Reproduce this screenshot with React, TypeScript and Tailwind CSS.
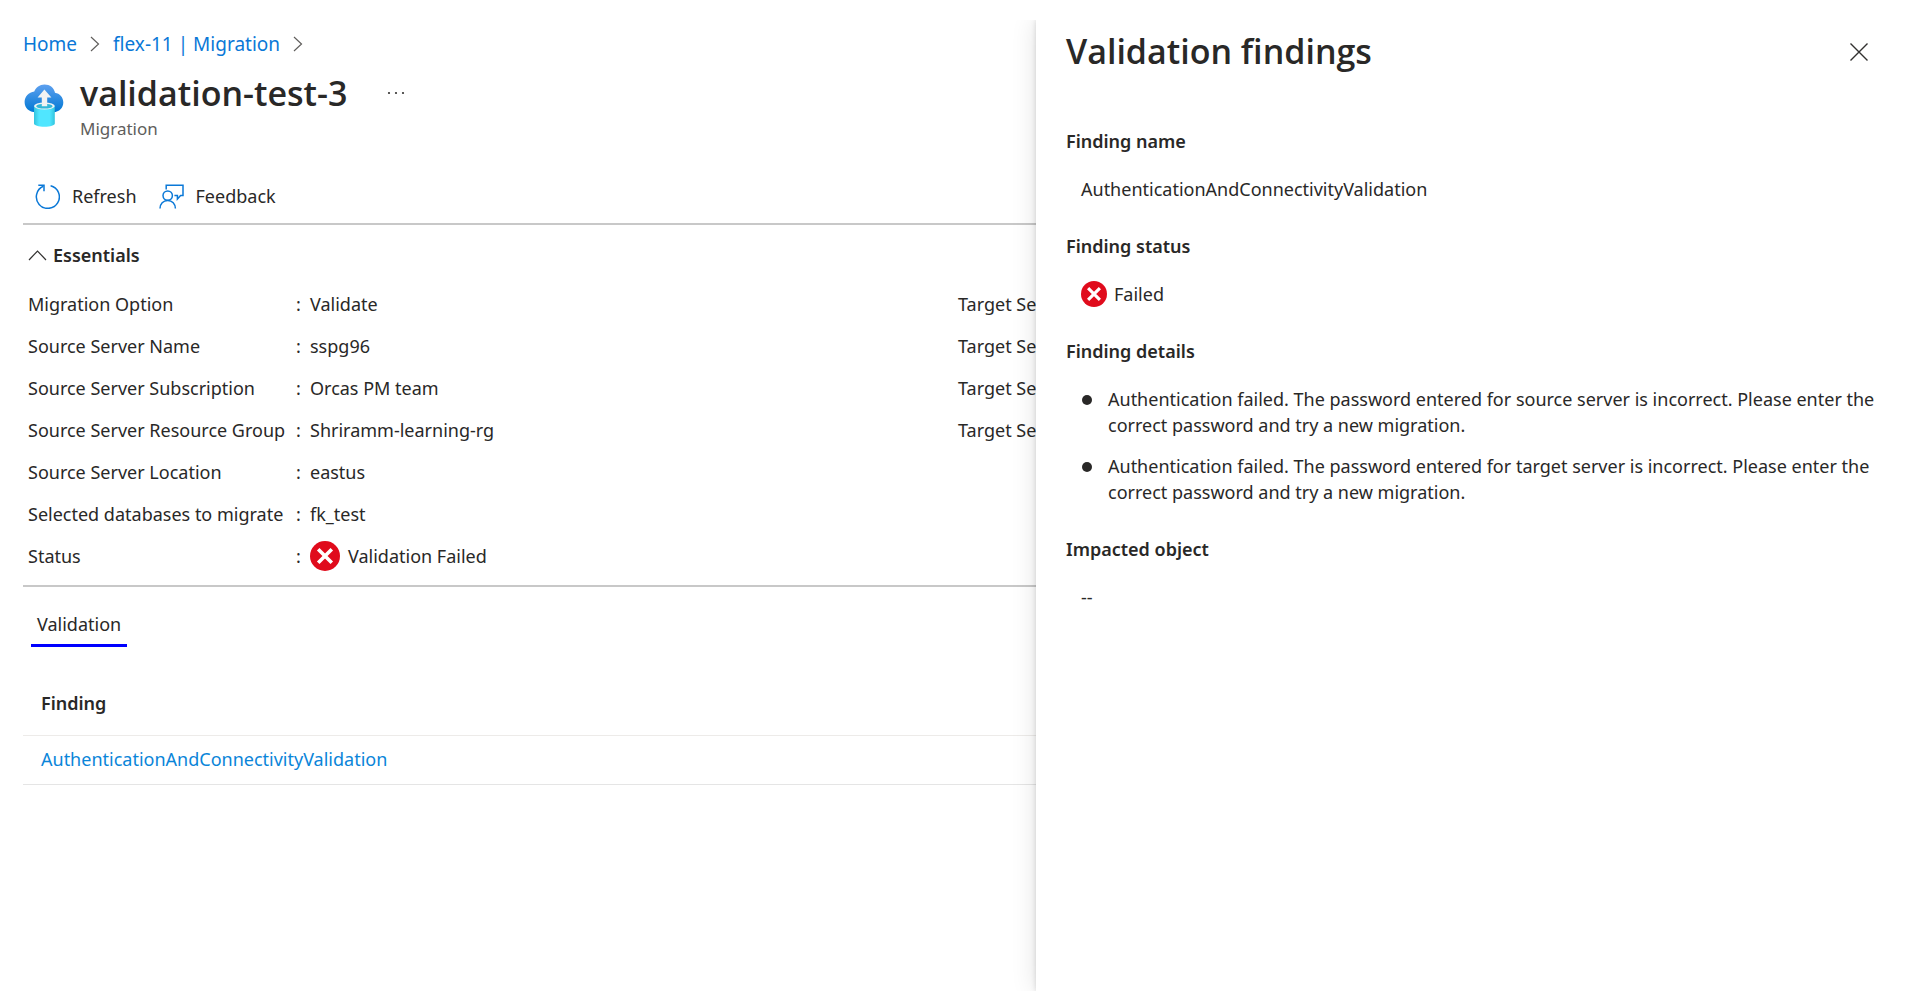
import type { ReactNode } from 'react';

const essentials: { label: string; value: string; failed?: boolean; target?: string }[] = [
  { label: 'Migration Option', value: 'Validate', target: 'Target Se' },
  { label: 'Source Server Name', value: 'sspg96', target: 'Target Se' },
  { label: 'Source Server Subscription', value: 'Orcas PM team', target: 'Target Se' },
  { label: 'Source Server Resource Group', value: 'Shriramm-learning-rg', target: 'Target Se' },
  { label: 'Source Server Location', value: 'eastus' },
  { label: 'Selected databases to migrate', value: 'fk_test' },
  { label: 'Status', value: 'Validation Failed', failed: true },
];

const details = [
  'Authentication failed. The password entered for source server is incorrect. Please enter the correct password and try a new migration.',
  'Authentication failed. The password entered for target server is incorrect. Please enter the correct password and try a new migration.',
];

function FailedIcon({ className }: { className: string }) {
  return (
    <svg viewBox="0 0 30 30" className={className} aria-hidden="true">
      <circle cx="15" cy="15" r="15" fill="#e00b1c" />
      <path d="M8.2 8.2 21.8 21.8M21.8 8.2 8.2 21.8" stroke="#fff" strokeWidth="3.6" fill="none" />
    </svg>
  );
}

function BreadcrumbChevron() {
  return (
    <svg viewBox="0 0 10 16" className="h-4 w-[10px]" fill="none" stroke="#605e5c" strokeWidth="1.2" aria-hidden="true">
      <path d="M1 1l7.5 7L1 15" />
    </svg>
  );
}

function MigrationIcon() {
  return (
    <svg viewBox="0 0 40 43" className="h-[43px] w-10 shrink-0" aria-hidden="true">
      <defs>
        <linearGradient id="cloud" x1="0" y1="0" x2="0" y2="1">
          <stop offset="0" stopColor="#5ea0ef" />
          <stop offset="1" stopColor="#0078d4" />
        </linearGradient>
        <linearGradient id="cylinder" x1="0" y1="0" x2="1" y2="0">
          <stop offset="0" stopColor="#32c4de" />
          <stop offset="0.25" stopColor="#50e6ff" />
          <stop offset="0.75" stopColor="#50e6ff" />
          <stop offset="1" stopColor="#32c4de" />
        </linearGradient>
      </defs>
      <path
        d="M39.3 18.6c0-5.300-3.600-9-8.300-9.800C30.200 3.700 26 .4 20.500.4c-4.800 0-8.700 2.900-10.200 7.100C4.600 8.200.6 12.600.6 17.900c0 6 4.800 10.300 10.800 10.300h18.300c5.400 0 9.600-4.200 9.600-9.600z"
        fill="url(#cloud)"
      />
      <path d="M10 22v17.500c0 1.900 4.500 3.200 10.400 3.200s10.400-1.300 10.400-3.200V22z" fill="url(#cylinder)" />
      <ellipse cx="20.400" cy="22" rx="10.400" ry="3.500" fill="#f0f2f4" />
      <ellipse cx="20.400" cy="22.200" rx="8.200" ry="2.400" fill="#32b8d8" />
      <path d="M20.400 5.400l7 8h-4.200v8.800h-5.400v-8.800h-4.200z" fill="#f2f2f2" />
    </svg>
  );
}

function RefreshIcon() {
  return (
    <svg viewBox="0 0 25 25" className="size-[25px]" fill="none" stroke="#0a78d7" strokeWidth="1.5" aria-hidden="true">
      <path d="M15.600 1.700A11.500 11.500 0 1 1 8.300 2.300" />
      <path d="M3.300 1.200H9V7.200" />
    </svg>
  );
}

function FeedbackIcon() {
  return (
    <svg viewBox="0 0 25 25" className="size-[25px]" fill="none" stroke="#0a78d7" strokeWidth="1.5" aria-hidden="true">
      <path d="M7.200 5.500V1.200H24V11.600H21.600L18.400 15V11.600H15.400" />
      <circle cx="8.700" cy="11.600" r="4.700" />
      <path d="M1 24.500C1 19.800 4.200 16.400 8.700 16.400s7.700 3.400 7.700 8.100" />
    </svg>
  );
}

function Section({ title, children }: { title: string; children: ReactNode }) {
  return (
    <section>
      <h3 className="font-semibold">{title}</h3>
      <div className="mt-[22px] pl-[15px]">{children}</div>
    </section>
  );
}

export default function App() {
  return (
    <div className="flex min-h-screen flex-col bg-white pt-5 font-['Noto_Sans','Open_Sans',sans-serif] text-[18px] leading-[26px] text-[#292827]">
      <div className="flex flex-1 overflow-hidden">
        <main className="min-w-0 flex-1 whitespace-nowrap pl-[23px]">
          <nav aria-label="Breadcrumb" className="flex items-center pt-[11px] text-[19px] text-[#0a78d7]">
            <a href="#home">Home</a>
            <span className="px-[13px]"><BreadcrumbChevron /></span>
            <a href="#migration">flex-11 | Migration</a>
            <span className="px-[13px]"><BreadcrumbChevron /></span>
          </nav>

          <header className="mt-[13px] flex items-start">
            <div className="pt-[14px] pl-px"><MigrationIcon /></div>
            <div className="pl-4">
              <div className="flex h-[46px] items-center">
                <h1 className="font-['Open_Sans','Noto_Sans',sans-serif] text-[34px] leading-[46px] font-semibold">validation-test-3</h1>
                <button type="button" aria-label="More actions" className="ml-10">
                  <svg viewBox="0 0 18 4" className="h-1 w-[18px]" fill="#323130" aria-hidden="true">
                    <circle cx="2" cy="2" r="1.100" />
                    <circle cx="9" cy="2" r="1.100" />
                    <circle cx="16" cy="2" r="1.100" />
                  </svg>
                </button>
              </div>
              <p className="text-[17px] leading-[26px] text-[#605e5c]">Migration</p>
            </div>
          </header>

          <div className="flex h-[83px] items-end gap-[22px] border-b-2 border-[#c8c8c8] pb-[14px] pl-3">
            <button type="button" className="flex items-center gap-3"><RefreshIcon />Refresh</button>
            <button type="button" className="flex items-center gap-3"><FeedbackIcon />Feedback</button>
          </div>

          <section className="border-b-2 border-[#c8c8c8] pb-2 pl-[5px]">
            <button type="button" className="mt-[17px] flex items-center gap-[6px] font-semibold">
              <svg viewBox="0 0 19 12" className="h-3 w-[19px]" fill="none" stroke="#323130" strokeWidth="1.200" aria-hidden="true">
                <path d="M1 11l8.500-9L18 11" />
              </svg>
              Essentials
            </button>
            <dl className="mt-[15px]">
              {essentials.map((row) => (
                <div key={row.label} className="flex h-[42px] items-center">
                  <dt className="w-[268px] shrink-0">{row.label}</dt>
                  <dd className="flex w-[662px] shrink-0 items-center">
                    <span className="w-[14px]">:</span>
                    {row.failed && <FailedIcon className="mr-2 size-[30px]" />}
                    {row.value}
                  </dd>
                  {row.target && <dt>{row.target}</dt>}
                </div>
              ))}
            </dl>
          </section>

          <div role="tablist" className="mt-6 pl-2">
            <button type="button" role="tab" aria-selected="true" className="border-b-3 border-[#0000ff] px-[6px] pb-[7px]">
              Validation
            </button>
          </div>

          <table className="mt-[30px] w-full text-left">
            <thead>
              <tr className="h-[58px] border-b border-[#edebe9]">
                <th className="pb-[6px] pl-[18px] font-semibold">Finding</th>
              </tr>
            </thead>
            <tbody>
              <tr className="h-[49px] border-b border-[#e5e5e5]">
                <td className="pb-[2px] pl-[18px]">
                  <a href="#finding" className="text-[#0a85d9]">AuthenticationAndConnectivityValidation</a>
                </td>
              </tr>
            </tbody>
          </table>
        </main>

        <aside className="z-10 w-[875px] shrink-0 bg-white pr-7 pl-[30px] shadow-[0_0_24px_rgba(0,0,0,0.12),0_0_5px_rgba(0,0,0,0.14)]">
          <div className="flex items-center justify-between pt-2 pr-[15px]">
            <h2 className="font-['Open_Sans','Noto_Sans',sans-serif] text-[34px] leading-[46px] font-semibold">Validation findings</h2>
            <button type="button" aria-label="Close" className="pt-[2px]">
              <svg viewBox="0 0 18 18" className="size-[18px]" fill="none" stroke="#323130" strokeWidth="1.400" aria-hidden="true">
                <path d="M.5.5l17 17M17.500.5l-17 17" />
              </svg>
            </button>
          </div>
          <div className="mt-[54px] flex flex-col gap-[31px]">
            <Section title="Finding name">AuthenticationAndConnectivityValidation</Section>
            <Section title="Finding status">
              <div className="flex items-center gap-[7px]">
                <FailedIcon className="size-[26px]" />
                Failed
              </div>
            </Section>
            <Section title="Finding details">
              <ul className="flex flex-col gap-[15px]">
                {details.map((text) => (
                  <li key={text} className="flex gap-4">
                    <span className="mt-[9px] ml-px size-[10px] shrink-0 rounded-full bg-[#292827]" />
                    <span>{text}</span>
                  </li>
                ))}
              </ul>
            </Section>
            <Section title="Impacted object">--</Section>
          </div>
        </aside>
      </div>
    </div>
  );
}
